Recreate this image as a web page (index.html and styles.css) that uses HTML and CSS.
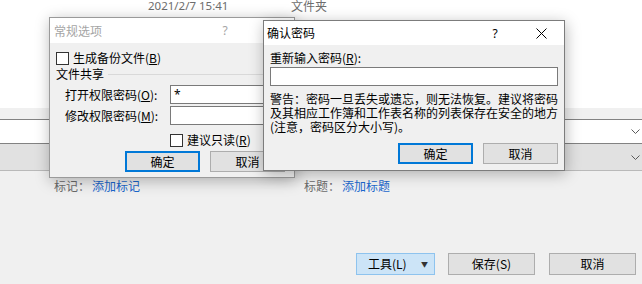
FILE: index.html
```html
<!DOCTYPE html>
<html lang="zh-CN">
<head>
    <meta charset="UTF-8">
    <title>另存为 - 常规选项</title>
    <link rel="stylesheet" href="styles.css">
</head>
<body>

    <div class="page">
        <div class="top-area">
            <div class="file-row">
                <span class="file-date">2021/2/7 15:41</span>
                <span class="file-type">文件夹</span>
            </div>
        </div>
        <div class="strip"></div>
        <div class="combo combo-edit">
            <svg class="chev" width="9" height="5" viewBox="0 0 9 5"><polyline points="0.5,0.5 4.5,4.5 8.5,0.5" fill="none" stroke="#5a5a5a" stroke-width="1"/></svg>
        </div>
        <div class="combo combo-list">
            <svg class="chev" width="9" height="5" viewBox="0 0 9 5"><polyline points="0.5,0.5 4.5,4.5 8.5,0.5" fill="none" stroke="#5a5a5a" stroke-width="1"/></svg>
        </div>

        <div class="meta-row">
            <div class="meta"><span class="meta-label">标记：</span><span class="meta-link">添加标记</span></div>
            <div class="meta"><span class="meta-label">标题：</span><span class="meta-link">添加标题</span></div>
        </div>

        <div class="actions">
            <button class="btn btn-tools"><span>工具(L)</span><span class="caret">&#9660;</span></button>
            <button class="btn btn-save">保存(S)</button>
            <button class="btn btn-cancel">取消</button>
        </div>
    </div>

    <!-- inactive dialog underneath -->
    <div class="dialog dlg-options">
        <div class="dlg-title inactive">
            <span class="dlg-caption">常规选项</span>
            <span class="cap-btn cap-help">?</span>
            <span class="cap-btn cap-close"></span>
        </div>
        <div class="dlg-body">
            <div class="check-row">
                <span class="checkbox"></span>
                <span>生成备份文件(<u>B</u>)</span>
            </div>
            <div class="group-title">
                <span>文件共享</span>
                <span class="group-line"></span>
            </div>
            <div class="field-row">
                <span class="field-label">打开权限密码(<u>O</u>):</span>
                <span class="textbox">*</span>
            </div>
            <div class="field-row second">
                <span class="field-label">修改权限密码(<u>M</u>):</span>
                <span class="textbox"></span>
            </div>
            <div class="check-row readonly">
                <span class="checkbox"></span>
                <span>建议只读(<u>R</u>)</span>
            </div>
            <div class="btn-row left">
                <button class="btn dlg-btn default">确定</button>
                <button class="btn dlg-btn">取消</button>
            </div>
        </div>
    </div>

    <!-- active dialog on top -->
    <div class="dialog dlg-confirm">
        <div class="dlg-title">
            <span class="dlg-caption">确认密码</span>
            <span class="cap-btn cap-help">?</span>
            <span class="cap-btn cap-close">
                <svg width="11" height="11" viewBox="0 0 11 11"><path d="M0.5 0.5 L10.5 10.5 M10.5 0.5 L0.5 10.5" stroke="#000" stroke-width="1" fill="none"/></svg>
            </span>
        </div>
        <div class="dlg-body">
            <div class="confirm-label">重新输入密码(<u>R</u>):</div>
            <div class="textbox wide"></div>
            <p class="warning">警告：密码一旦丢失或遗忘，则无法恢复。建议将密码及其相应工作簿和工作表名称的列表保存在安全的地方(注意，密码区分大小写)。</p>
            <div class="btn-row right">
                <button class="btn dlg-btn default">确定</button>
                <button class="btn dlg-btn">取消</button>
            </div>
        </div>
    </div>

</body>
</html>
```

FILE: styles.css
```css
body {
    margin: 0;
    width: 642px;
    height: 284px;
    overflow: hidden;
    background-color: #f0f0f0;
    font-family: "Noto Sans CJK SC", "Noto Sans", sans-serif;
    font-size: 12px;
    color: #000;
}

/* explorer window behind the dialogs */
.top-area {
    height: 109px;
    background-color: #fff;
}
.file-row {
    display: flex;
    padding-left: 148px;
    height: 13px;
    line-height: 13px;
    margin-top: -1px;
    color: #6d6d6d;
}
.file-date {
    width: 143px;
    font-family: "Noto Sans", sans-serif;
    font-size: 11.5px;
}
.strip {
    height: 11px;
    background-color: #f0f0f0;
}
.combo {
    display: flex;
    align-items: center;
    justify-content: flex-end;
    padding-right: 2px;
}
.combo-edit {
    height: 23px;
    background-color: #fff;
    border-top: 1px solid #828282;
    border-bottom: 1px solid #828282;
}
.combo-list {
    height: 26px;
    background-color: #e1e1e1;
    border-bottom: 1px solid #b9b9b9;
}
.meta-row {
    display: flex;
    padding: 7px 0 0 54px;
    line-height: 16px;
}
.meta {
    width: 250px;
}
.meta-label {
    color: #6b6b6b;
    margin-right: 2px;
}
.meta-link {
    color: #1a66cc;
}
.actions {
    display: flex;
    justify-content: flex-end;
    gap: 13px;
    margin-top: 59px;
    padding-right: 6px;
}

button {
    font-family: "Noto Sans CJK SC", "Noto Sans", sans-serif;
    font-size: 12px;
    color: #000;
}
.btn {
    height: 22px;
    padding: 0;
    background-color: #e1e1e1;
    border: 1px solid #adadad;
    line-height: 18px;
}
.btn-tools {
    display: flex;
    align-items: center;
    justify-content: space-between;
    width: 79px;
    padding: 0 6px 0 11px;
    background-color: #cce4f7;
    border-color: #8ec3ee;
}
.caret {
    font-size: 7px;
    color: #333;
}
.btn-save,
.btn-cancel {
    width: 87px;
}
.btn-cancel {
    margin-left: 1px;
}

/* dialogs */
.dialog {
    position: absolute;
    background-color: #f0f0f0;
    box-shadow: 1px 3px 14px rgba(0, 0, 0, 0.28);
}
.dlg-options {
    left: 49px;
    top: 17px;
    width: 244px;
    border: 1px solid #9a9a9a;
}
.dlg-confirm {
    left: 263px;
    top: 20px;
    width: 300px;
    border: 1px solid #7c7c7c;
}
.dlg-title {
    display: flex;
    align-items: center;
    background-color: #fff;
}
.dlg-options .dlg-title {
    height: 25px;
    padding-left: 4px;
}
.dlg-confirm .dlg-title {
    height: 24px;
    padding-left: 3px;
}
.dlg-caption {
    flex: 1;
    line-height: 16px;
}
.inactive {
    color: #a5a5a5;
}
.cap-btn {
    display: flex;
    align-items: center;
    justify-content: center;
    width: 46px;
    height: 100%;
    font-family: "Noto Sans", sans-serif;
    font-size: 12px;
}
.dlg-body {
    padding: 0 6px;
}

.check-row {
    display: flex;
    align-items: center;
    height: 14px;
    line-height: 14px;
    margin-top: 8px;
}
.checkbox {
    width: 11px;
    height: 11px;
    margin-right: 4px;
    background-color: #fff;
    border: 1px solid #333;
}
.group-title {
    display: flex;
    align-items: center;
    height: 14px;
    line-height: 14px;
    margin-top: 2px;
}
.group-line {
    flex: 1;
    margin-left: 4px;
    border-top: 1px solid #d9d9d9;
}
.field-row {
    display: flex;
    align-items: center;
    margin-top: 4px;
}
.field-row.second {
    margin-top: 2px;
}
.field-label {
    width: 105px;
    padding-left: 9px;
    line-height: 14px;
}
.textbox {
    flex: 1;
    height: 17px;
    padding-left: 3px;
    background-color: #fff;
    border: 1px solid #7a7a7a;
    line-height: 17px;
    font-family: "Noto Sans", sans-serif;
}
.textbox.wide {
    height: 17px;
    margin-top: 2px;
}
.check-row.readonly {
    margin: 8px 0 0 114px;
}
.btn-row {
    display: flex;
    gap: 10px;
}
.btn-row.left {
    margin: 4px 0 0 69px;
    padding-bottom: 5px;
}
.btn-row.right {
    justify-content: flex-end;
    margin-top: 9px;
    padding-bottom: 6px;
}
.dlg-btn {
    width: 75px;
    height: 21px;
}
.dlg-btn.default {
    border: 2px solid #0078d7;
    line-height: 17px;
}

.confirm-label {
    margin-top: 6px;
    line-height: 14px;
}
.warning {
    margin: 6px 0 0;
    line-height: 14px;
    word-break: break-all;
}
```
